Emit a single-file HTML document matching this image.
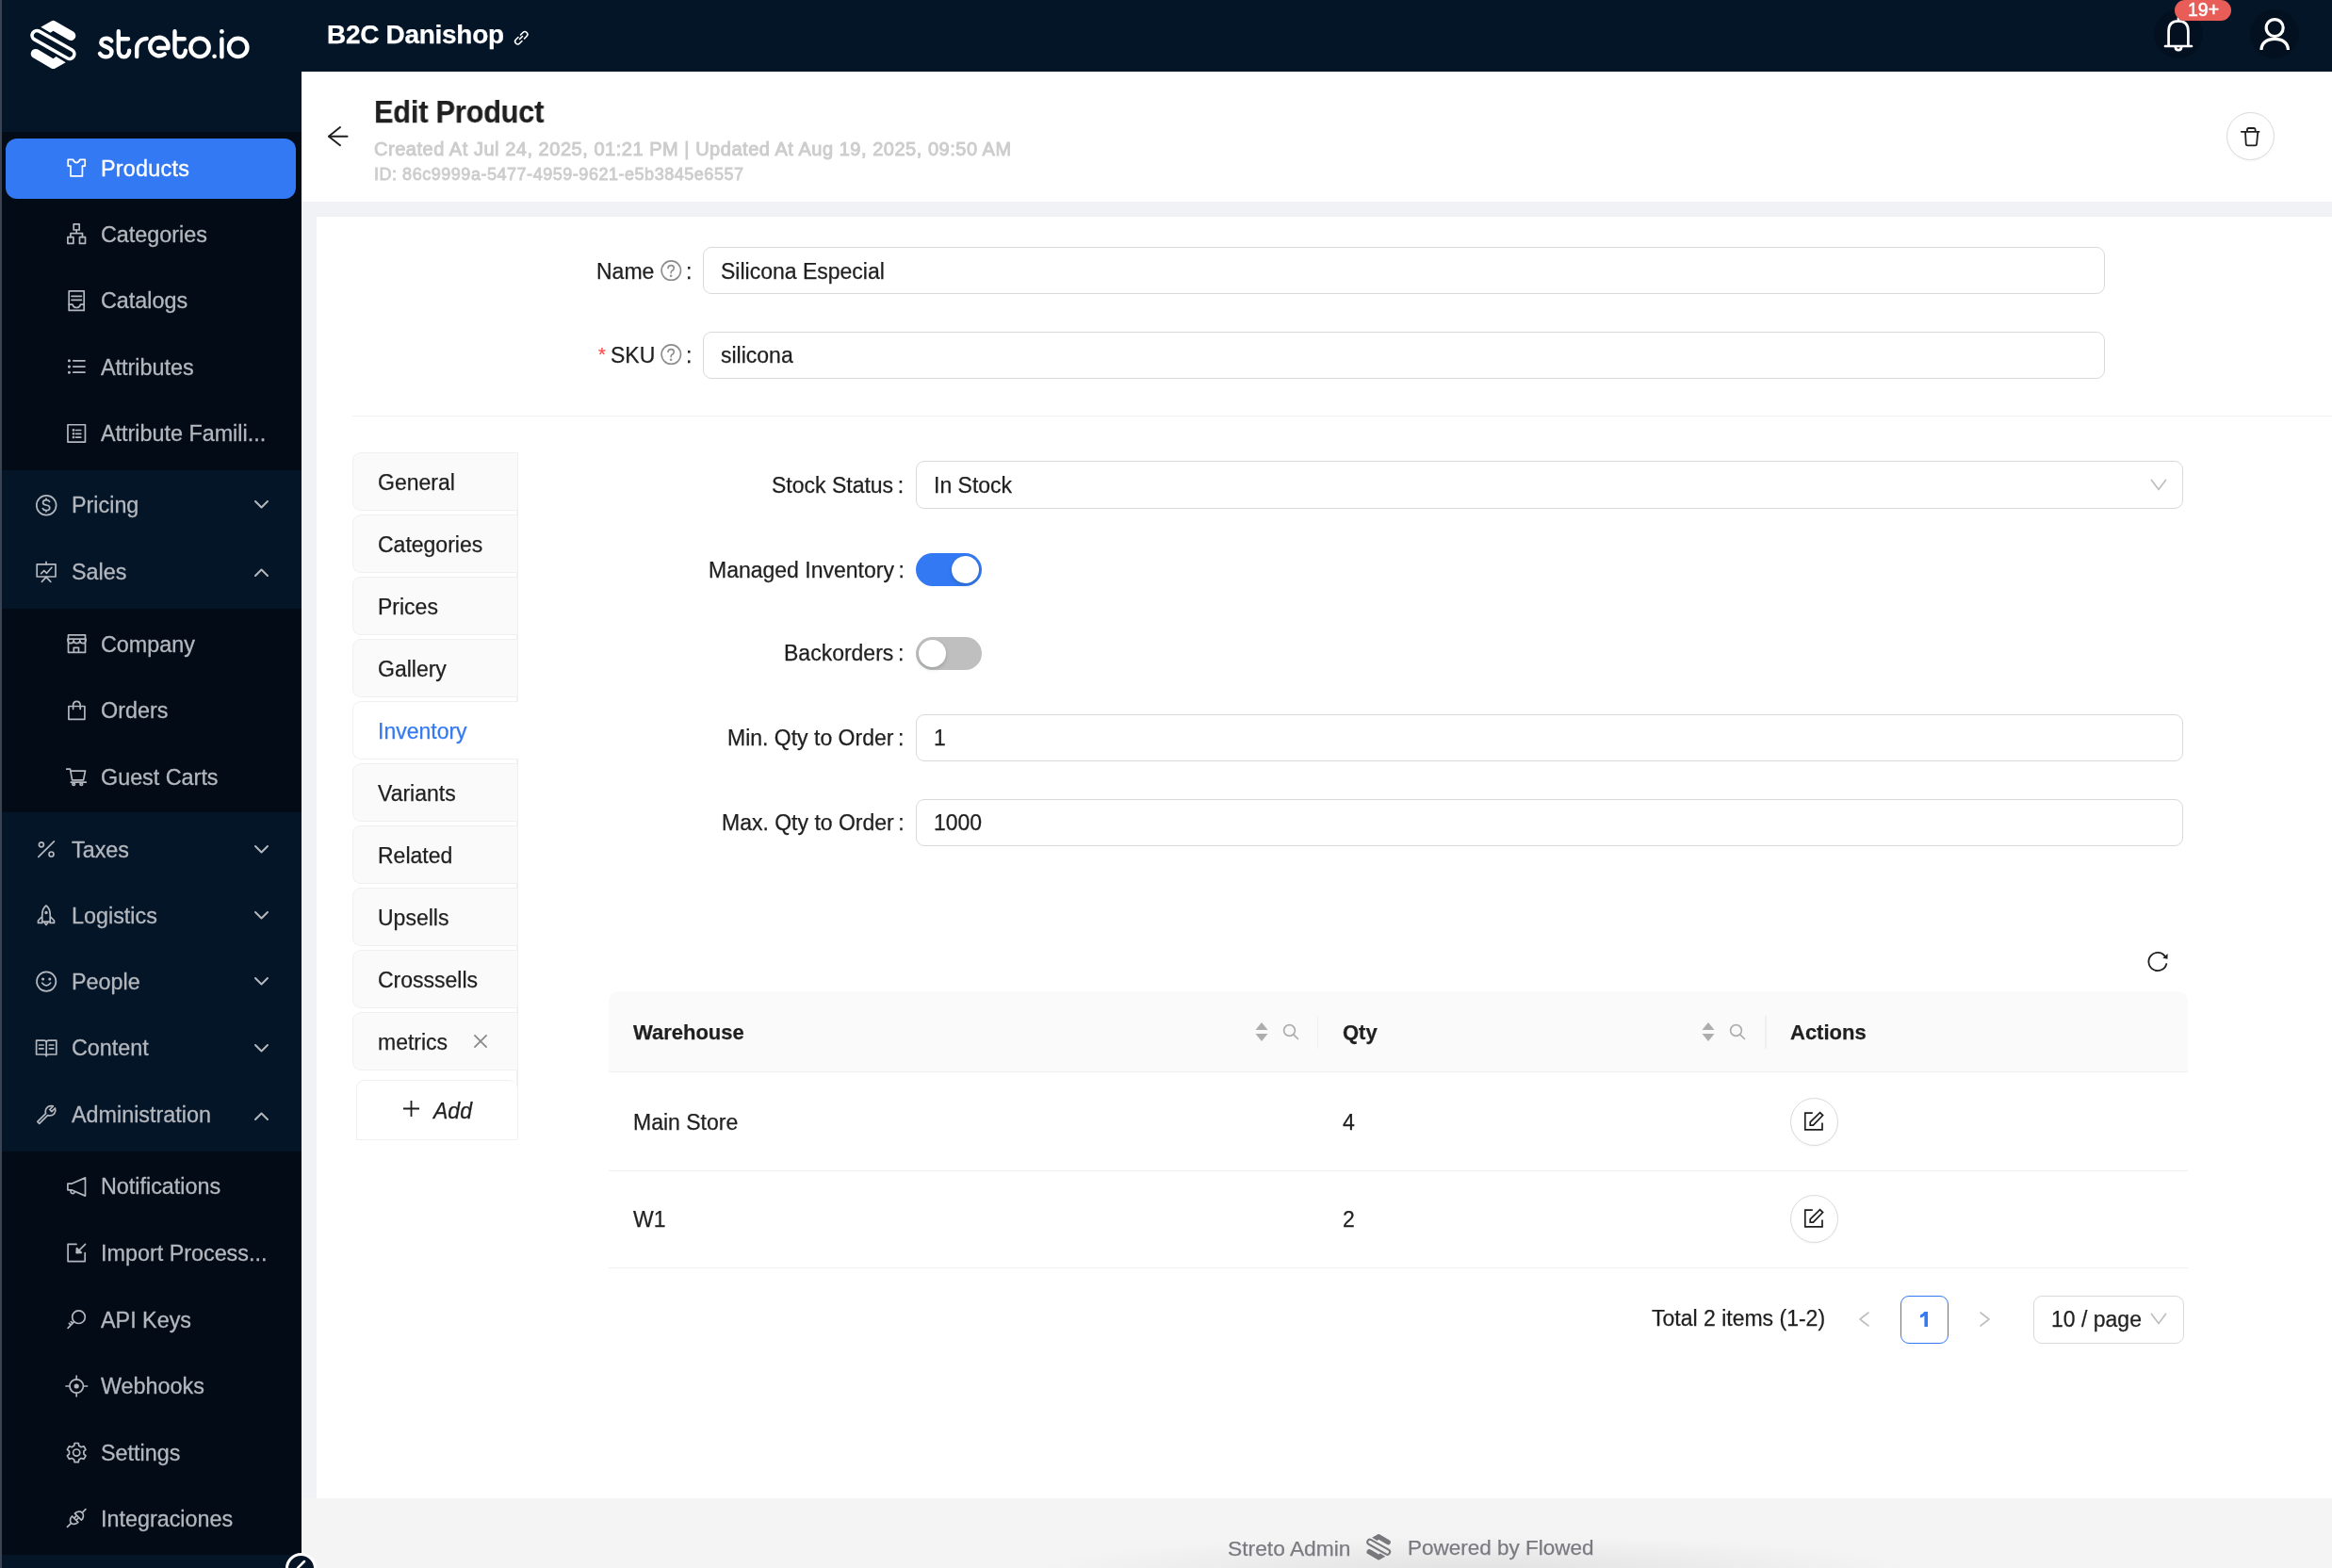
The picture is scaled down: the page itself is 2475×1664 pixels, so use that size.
<!DOCTYPE html>
<html><head><meta charset="utf-8">
<style>
*{box-sizing:border-box;margin:0;padding:0}
html,body{width:2475px;height:1664px;overflow:hidden}
body{position:relative;background:#f0f2f5;font-family:"Liberation Sans",sans-serif;color:#1f1f1f}
.a{position:absolute}
svg{overflow:visible}
.t{position:absolute;white-space:nowrap;line-height:1;will-change:transform;-webkit-text-stroke-width:0.25px}
.inp{position:absolute;border:1.5px solid #d9d9d9;border-radius:9px;background:#fff}
.tab{position:absolute;left:374px;width:175px;height:62px;background:#fafafa;border:1.5px solid #f0f0f0;border-right:none;border-radius:9px 0 0 9px}
</style></head><body>
<div class="a" style="left:0;top:0;width:2475px;height:76px;background:#041528"></div>
<div class="a" style="left:0;top:76px;width:320px;height:1588px;background:#041528"></div>
<div class="a" style="left:0;top:140px;width:320px;height:359px;background:#030b17"></div>
<div class="a" style="left:0;top:646px;width:320px;height:216px;background:#030b17"></div>
<div class="a" style="left:0;top:1222px;width:320px;height:428px;background:#030b17"></div>
<div class="a" style="left:6px;top:147px;width:308px;height:64px;background:#3479f4;border-radius:12px"></div>
<div class="a" style="left:0;top:0;width:2px;height:1664px;background:#3a4452"></div>
<svg class="a" style="left:71px;top:168px;" width="22" height="22" viewBox="0 0 22 22" fill="none" stroke="#ffffff" stroke-width="1.7" stroke-linecap="round" stroke-linejoin="round"><path d="M1.2,1.4 H6.6 Q7.9,4.6 10.2,4.6 Q12.5,4.6 13.8,1.4 H19.2 V8.1 H16.4 V18.9 H4 V8.1 H1.2 Z"/></svg>
<div class="t" style="left:107.3px;top:167.6px;font-size:23.35px;color:#ffffff;font-weight:400;letter-spacing:0.25px;-webkit-text-stroke:0.35px #fff">Products</div>
<svg class="a" style="left:71px;top:238.3px;" width="22" height="22" viewBox="0 0 22 22" fill="none" stroke="#b4b8be" stroke-width="1.7" stroke-linecap="round" stroke-linejoin="round"><rect x="7.2" y="-0.2" width="6" height="6.2"/><rect x="0.9" y="13.7" width="6" height="6.6"/><rect x="13.5" y="13.7" width="6" height="6.6"/><path d="M10.2,6 V9.7 M3.9,13.7 V9.7 H16.5 V13.7"/></svg>
<div class="t" style="left:107.3px;top:237.9px;font-size:23.35px;color:#b4b8be;font-weight:400;-webkit-text-stroke:0.3px #b4b8be">Categories</div>
<svg class="a" style="left:71px;top:308.7px;" width="22" height="22" viewBox="0 0 22 22" fill="none" stroke="#b4b8be" stroke-width="1.7" stroke-linecap="round" stroke-linejoin="round"><rect x="2.2" y="-0.05" width="16" height="20.5"/><path d="M5,5.3 H15.4 M5,9.3 H15.4 M2.2,14.2 H6 Q7,17.5 10.2,17.5 Q13.4,17.5 14.4,14.2 H18.2"/></svg>
<div class="t" style="left:107.3px;top:308.3px;font-size:23.35px;color:#b4b8be;font-weight:400;-webkit-text-stroke:0.3px #b4b8be">Catalogs</div>
<svg class="a" style="left:71px;top:379px;" width="22" height="22" viewBox="0 0 22 22" fill="none" stroke="#b4b8be" stroke-width="1.7" stroke-linecap="round" stroke-linejoin="round"><path d="M6.8,3.8 H19 M6.8,10.1 H19 M6.8,16.2 H19"/><circle cx="2.4" cy="3.8" r="0.7" fill="#b4b8be"/><circle cx="2.4" cy="10.1" r="0.7" fill="#b4b8be"/><circle cx="2.4" cy="16.2" r="0.7" fill="#b4b8be"/></svg>
<div class="t" style="left:107.3px;top:378.6px;font-size:23.35px;color:#b4b8be;font-weight:400;-webkit-text-stroke:0.3px #b4b8be">Attributes</div>
<svg class="a" style="left:71px;top:449.5px;" width="22" height="22" viewBox="0 0 22 22" fill="none" stroke="#b4b8be" stroke-width="1.7" stroke-linecap="round" stroke-linejoin="round"><rect x="0.95" y="0.75" width="18.5" height="18.3"/><path d="M9.6,6.5 H14.8 M9.6,10.3 H14.8 M9.6,14.1 H14.8"/><circle cx="7" cy="6.5" r="0.55" fill="#b4b8be"/><circle cx="7" cy="10.3" r="0.55" fill="#b4b8be"/><circle cx="7" cy="14.1" r="0.55" fill="#b4b8be"/></svg>
<div class="t" style="left:107.3px;top:449.1px;font-size:23.35px;color:#b4b8be;font-weight:400;-webkit-text-stroke:0.3px #b4b8be">Attribute Famili...</div>
<svg class="a" style="left:38px;top:525px;" width="22" height="22" viewBox="0 0 22 22" fill="none" stroke="#b4b8be" stroke-width="1.7" stroke-linecap="round" stroke-linejoin="round"><circle cx="11.2" cy="11.2" r="10.4"/><path d="M14.6,7.3 Q13.8,5.7 11,5.7 Q7.6,5.7 7.6,8.4 Q7.6,10.4 11,11 Q14.8,11.6 14.8,14 Q14.8,16.6 11,16.6 Q8.2,16.6 7.4,14.6 M11,4 V5.7 M11,16.6 V18"/></svg>
<div class="t" style="left:76.3px;top:524.6px;font-size:23.35px;color:#b4b8be;font-weight:400;-webkit-text-stroke:0.3px #b4b8be">Pricing</div>
<svg class="a" style="left:270px;top:531px;" width="15" height="9" viewBox="0 0 15 9" fill="none" stroke="#b4b8be" stroke-width="2" stroke-linecap="round" stroke-linejoin="round"><path d="M1 1 L7.5 7.5 L14 1"/></svg>
<svg class="a" style="left:38px;top:596px;" width="22" height="22" viewBox="0 0 22 22" fill="none" stroke="#b4b8be" stroke-width="1.7" stroke-linecap="round" stroke-linejoin="round"><rect x="1.2" y="2.9" width="19.8" height="13.1"/><path d="M11,0.3 V2.9 M5.7,12.6 L8.8,9.5 L11.6,12.3 L16.9,6.3 M11,16.4 L6.4,21.4 M11,16.4 L15.8,21.4"/></svg>
<div class="t" style="left:76.3px;top:595.6px;font-size:23.35px;color:#b4b8be;font-weight:400;-webkit-text-stroke:0.3px #b4b8be">Sales</div>
<svg class="a" style="left:270px;top:603px;" width="15" height="9" viewBox="0 0 15 9" fill="none" stroke="#b4b8be" stroke-width="2" stroke-linecap="round" stroke-linejoin="round"><path d="M1 8 L7.5 1.5 L14 8"/></svg>
<svg class="a" style="left:71px;top:673px;" width="22" height="22" viewBox="0 0 22 22" fill="none" stroke="#b4b8be" stroke-width="1.7" stroke-linecap="round" stroke-linejoin="round"><path d="M1.5,0.8 H19.5 V19.3 H1.5 Z M1.5,5.2 H19.5 M0.8,5.2 Q0.8,9.6 4,9.6 Q7.2,9.6 7.2,6.5 Q7.2,9.6 10.5,9.6 Q13.8,9.6 13.8,6.5 Q13.8,9.6 17,9.6 Q20.2,9.6 20.2,5.2 M7.3,19.3 V14.4 H12.5 V19.3"/></svg>
<div class="t" style="left:107.3px;top:672.6px;font-size:23.35px;color:#b4b8be;font-weight:400;-webkit-text-stroke:0.3px #b4b8be">Company</div>
<svg class="a" style="left:71px;top:743px;" width="22" height="22" viewBox="0 0 22 22" fill="none" stroke="#b4b8be" stroke-width="1.7" stroke-linecap="round" stroke-linejoin="round"><rect x="1.9" y="6.5" width="17" height="13.8"/><path d="M6.6,9.5 V5.8 Q6.6,1.4 10.4,1.4 Q14.2,1.4 14.2,5.8 V9.5"/></svg>
<div class="t" style="left:107.3px;top:742.6px;font-size:23.35px;color:#b4b8be;font-weight:400;-webkit-text-stroke:0.3px #b4b8be">Orders</div>
<svg class="a" style="left:71px;top:814px;" width="22" height="22" viewBox="0 0 22 22" fill="none" stroke="#b4b8be" stroke-width="1.7" stroke-linecap="round" stroke-linejoin="round"><path d="M-0.3,2.2 H3.5 L5.6,13.8 H17.5 L19.5,4.2 H4.1 M4.3,16.2 H20.3"/><circle cx="7.2" cy="18.2" r="1.3"/><circle cx="15.3" cy="18.2" r="1.3"/></svg>
<div class="t" style="left:107.3px;top:813.6px;font-size:23.35px;color:#b4b8be;font-weight:400;-webkit-text-stroke:0.3px #b4b8be">Guest Carts</div>
<svg class="a" style="left:38px;top:891px;" width="22" height="22" viewBox="0 0 22 22" fill="none" stroke="#b4b8be" stroke-width="1.7" stroke-linecap="round" stroke-linejoin="round"><circle cx="5.9" cy="5.3" r="2.5"/><circle cx="16.5" cy="15.5" r="2.5"/><path d="M19.4,1.8 L2.8,18.4"/></svg>
<div class="t" style="left:76.3px;top:890.6px;font-size:23.35px;color:#b4b8be;font-weight:400;-webkit-text-stroke:0.3px #b4b8be">Taxes</div>
<svg class="a" style="left:270px;top:897px;" width="15" height="9" viewBox="0 0 15 9" fill="none" stroke="#b4b8be" stroke-width="2" stroke-linecap="round" stroke-linejoin="round"><path d="M1 1 L7.5 7.5 L14 1"/></svg>
<svg class="a" style="left:38px;top:961px;" width="22" height="22" viewBox="0 0 22 22" fill="none" stroke="#b4b8be" stroke-width="1.7" stroke-linecap="round" stroke-linejoin="round"><path d="M11,0 Q6.8,3.2 6.8,10 V17.2 H15.2 V10 Q15.2,3.2 11,0 Z M6.8,11.5 L2.5,16 V18.4 H6.8 M15.2,11.5 L19.5,16 V18.4 H15.2 M8.6,17.2 L11,20.6 L13.4,17.2"/><circle cx="11" cy="7.5" r="0.9" fill="#b4b8be"/></svg>
<div class="t" style="left:76.3px;top:960.6px;font-size:23.35px;color:#b4b8be;font-weight:400;-webkit-text-stroke:0.3px #b4b8be">Logistics</div>
<svg class="a" style="left:270px;top:967px;" width="15" height="9" viewBox="0 0 15 9" fill="none" stroke="#b4b8be" stroke-width="2" stroke-linecap="round" stroke-linejoin="round"><path d="M1 1 L7.5 7.5 L14 1"/></svg>
<svg class="a" style="left:38px;top:1031.4px;" width="22" height="22" viewBox="0 0 22 22" fill="none" stroke="#b4b8be" stroke-width="1.7" stroke-linecap="round" stroke-linejoin="round"><circle cx="11.2" cy="10.6" r="10.2"/><path d="M6.8,12.2 Q11.2,17.6 15.6,12.2"/><circle cx="7.6" cy="8" r="0.7" fill="#b4b8be"/><circle cx="14.8" cy="8" r="0.7" fill="#b4b8be"/></svg>
<div class="t" style="left:76.3px;top:1031.0px;font-size:23.35px;color:#b4b8be;font-weight:400;-webkit-text-stroke:0.3px #b4b8be">People</div>
<svg class="a" style="left:270px;top:1037.4px;" width="15" height="9" viewBox="0 0 15 9" fill="none" stroke="#b4b8be" stroke-width="2" stroke-linecap="round" stroke-linejoin="round"><path d="M1 1 L7.5 7.5 L14 1"/></svg>
<svg class="a" style="left:38px;top:1101.5px;" width="22" height="22" viewBox="0 0 22 22" fill="none" stroke="#b4b8be" stroke-width="1.7" stroke-linecap="round" stroke-linejoin="round"><path d="M0.6,2.2 H8.6 Q11.2,2.2 11.2,4.4 V18.7 Q11.2,17 8.6,17 H0.6 Z M21.8,2.2 H13.8 Q11.2,2.2 11.2,4.4 M21.8,2.2 V17 H13.8 Q11.2,17 11.2,18.7 M3.6,7 H8 M3.6,10.8 H8 M14.4,7 H18.8 M14.4,10.8 H18.8"/></svg>
<div class="t" style="left:76.3px;top:1101.1px;font-size:23.35px;color:#b4b8be;font-weight:400;-webkit-text-stroke:0.3px #b4b8be">Content</div>
<svg class="a" style="left:270px;top:1107.5px;" width="15" height="9" viewBox="0 0 15 9" fill="none" stroke="#b4b8be" stroke-width="2" stroke-linecap="round" stroke-linejoin="round"><path d="M1 1 L7.5 7.5 L14 1"/></svg>
<svg class="a" style="left:38px;top:1172.5px;" width="22" height="22" viewBox="0 0 22 22" fill="none" stroke="#b4b8be" stroke-width="1.7" stroke-linecap="round" stroke-linejoin="round"><path d="M1.8,17.4 L10.6,8.6 Q9.4,4.4 12.6,1.8 Q15.2,0 18.4,0.9 L14.8,4.5 L16.9,6.6 L20.5,3 Q21.6,6 19.6,8.8 Q16.8,11.8 12.6,10.6 L3.8,19.4 Z"/></svg>
<div class="t" style="left:76.3px;top:1172.1px;font-size:23.35px;color:#b4b8be;font-weight:400;-webkit-text-stroke:0.3px #b4b8be">Administration</div>
<svg class="a" style="left:270px;top:1179.5px;" width="15" height="9" viewBox="0 0 15 9" fill="none" stroke="#b4b8be" stroke-width="2" stroke-linecap="round" stroke-linejoin="round"><path d="M1 8 L7.5 1.5 L14 8"/></svg>
<svg class="a" style="left:71px;top:1248.6px;" width="22" height="22" viewBox="0 0 22 22" fill="none" stroke="#b4b8be" stroke-width="1.7" stroke-linecap="round" stroke-linejoin="round"><path d="M0.9,7.2 H4.8 L19.5,0.9 V20.1 L4.8,13.8 H0.9 Z M4.2,14 Q3.6,17.6 6,17.6 Q8,17.6 8.4,15.4"/></svg>
<div class="t" style="left:107.3px;top:1248.2px;font-size:23.35px;color:#b4b8be;font-weight:400;-webkit-text-stroke:0.3px #b4b8be">Notifications</div>
<svg class="a" style="left:71px;top:1319.4px;" width="22" height="22" viewBox="0 0 22 22" fill="none" stroke="#b4b8be" stroke-width="1.7" stroke-linecap="round" stroke-linejoin="round"><path d="M10,1.4 H1.1 V19.6 H19.2 V10.6 M19.5,1.4 L11.4,9.5"/><path d="M10.2,10.6 L10.5,5.6 L15.3,10.4 Z" fill="#b4b8be"/></svg>
<div class="t" style="left:107.3px;top:1319.0px;font-size:23.35px;color:#b4b8be;font-weight:400;-webkit-text-stroke:0.3px #b4b8be">Import Process...</div>
<svg class="a" style="left:71px;top:1390px;" width="22" height="22" viewBox="0 0 22 22" fill="none" stroke="#b4b8be" stroke-width="1.7" stroke-linecap="round" stroke-linejoin="round"><circle cx="12.5" cy="7.7" r="6.8"/><path d="M7.5,12.9 L1.1,19.3 M4.2,16.2 L2.4,14.4 M6.1,14.3 L4.4,12.6"/></svg>
<div class="t" style="left:107.3px;top:1389.6px;font-size:23.35px;color:#b4b8be;font-weight:400;-webkit-text-stroke:0.3px #b4b8be">API Keys</div>
<svg class="a" style="left:71px;top:1460px;" width="22" height="22" viewBox="0 0 22 22" fill="none" stroke="#b4b8be" stroke-width="1.7" stroke-linecap="round" stroke-linejoin="round"><circle cx="10.2" cy="11" r="7.2"/><circle cx="10.2" cy="11" r="2.6" fill="#b4b8be" stroke="none"/><path d="M10.2,0.2 V3.7 M10.2,18.3 V21.8 M-1,11 H2.6 M17.8,11 H21.6"/></svg>
<div class="t" style="left:107.3px;top:1459.6px;font-size:23.35px;color:#b4b8be;font-weight:400;-webkit-text-stroke:0.3px #b4b8be">Webhooks</div>
<svg class="a" style="left:71px;top:1531px;" width="22" height="22" viewBox="0 0 22 22" fill="none" stroke="#b4b8be" stroke-width="1.7" stroke-linecap="round" stroke-linejoin="round"><g transform="translate(-0.8,-0.4)"><path d="M9,1.8 H13 L13.6,4.6 L16,6 L18.8,5.1 L20.8,8.6 L18.7,10.5 V13.3 L20.8,15.2 L18.8,18.7 L16,17.8 L13.6,19.2 L13,22 H9 L8.4,19.2 L6,17.8 L3.2,18.7 L1.2,15.2 L3.3,13.3 V10.5 L1.2,8.6 L3.2,5.1 L6,6 L8.4,4.6 Z" transform="translate(0,-0.9)"/><circle cx="11" cy="11" r="3.6"/></g></svg>
<div class="t" style="left:107.3px;top:1530.6px;font-size:23.35px;color:#b4b8be;font-weight:400;-webkit-text-stroke:0.3px #b4b8be">Settings</div>
<svg class="a" style="left:71px;top:1601px;" width="22" height="22" viewBox="0 0 22 22" fill="none" stroke="#b4b8be" stroke-width="1.7" stroke-linecap="round" stroke-linejoin="round"><path d="M8.4,5.2 L15.4,12.2 A4.95,6.2 45 0 0 8.4,5.2 Z M5.5,8 L11.9,14.4 A4.5,5.8 45 0 1 5.5,8 Z M7.6,10.1 L9.4,8.3 M9.8,12.3 L11.6,10.5 M16.3,4.3 L19.9,0.7 M4.6,15.3 L0.5,19.4"/></svg>
<div class="t" style="left:107.3px;top:1600.6px;font-size:23.35px;color:#b4b8be;font-weight:400;-webkit-text-stroke:0.3px #b4b8be">Integraciones</div>
<svg class="a" style="left:28px;top:18px" width="60" height="60" viewBox="0 0 1568 1568"><path id="lp" d="M400,280 L700,112 Q745,88 790,112 L1290,400 A132,132 0 0 1 1180,642 L745,385 L665,440 Z" fill="#fff"/><path d="M400,280 L700,112 Q745,88 790,112 L1290,400 A132,132 0 0 1 1180,642 L745,385 L665,440 Z" fill="#fff" transform="rotate(180 745 770)"/><path d="M356,395.7 L1266,915.7 A132,132 0 0 1 1134,1144.3 L224,624.3 A132,132 0 0 1 356,395.7 Z" fill="none" stroke="#fff" stroke-width="95"/></svg>
<svg class="a" style="left:0;top:0" width="280" height="76" viewBox="0 0 280 76" fill="none" stroke="#fff" stroke-width="4.4" stroke-linecap="round" stroke-linejoin="round"><path d="M118.3,43.4 C117,41.5 115,40.8 112.7,40.8 C109.5,40.8 107.3,42.5 107.3,45 C107.3,47.8 110,48.6 112.7,49.6 C115.8,50.7 118.5,51.8 118.5,55 C118.5,58.2 116,60.4 112.7,60.4 C109.8,60.4 107.5,59.2 106,56.8"/><path d="M125.8,33.3 V53.8 A5.7,6.6 0 0 0 137.2,53.8 M125.8,41.2 H136"/><path d="M145.2,60 V51.4 A10.4,10.4 0 0 1 155.6,41"/><path d="M168,51 H178.5 A9.7,9.7 0 1 0 174.7,57.3"/><path d="M185.5,33.3 V53.8 A5.7,6.6 0 0 0 196.9,53.8 M185.5,41.2 H195.7"/><circle cx="212" cy="50.4" r="9.7"/><circle cx="252.7" cy="50.4" r="9.7"/><path d="M235.4,41.5 V60.2"/><circle cx="227.6" cy="59.8" r="2.3" fill="#fff" stroke="none"/><circle cx="235.4" cy="33.4" r="2.4" fill="#fff" stroke="none"/></svg>
<div class="t" style="left:347px;top:22.7px;font-size:28px;color:#fff;font-weight:700;letter-spacing:-0.3px">B2C Danishop</div>
<svg class="a" style="left:544px;top:31px;" width="18" height="18" viewBox="0 0 18 18" fill="none" stroke="#fff" stroke-width="1.6" stroke-linecap="round" stroke-linejoin="round"><path d="M7.5 10.5 L10.5 7.5 M6 8.5 L3.5 11 Q1.5 13 3.5 15 Q5.5 17 7.5 15 L10 12.5 M8.5 6 L11 3.5 Q13 1.5 15 3.5 Q17 5.5 15 7.5 L12.5 10"/></svg>
<div class="a" style="left:2286px;top:10px;width:52px;height:52px;border-radius:50%;background:#03101f"></div>
<div class="a" style="left:2388px;top:10px;width:52px;height:52px;border-radius:50%;background:#03101f"></div>
<svg class="a" style="left:2296px;top:16px;" width="34" height="40" viewBox="0 0 34 40" fill="none" stroke="#fff" stroke-width="2.7" stroke-linecap="round" stroke-linejoin="round"><path d="M16 6.3 V3 M5.6 33 V17 Q5.6 6.3 16 6.3 Q26.4 6.3 26.4 17 V33 M2 33 H30 M12.8 33.2 Q12.8 37.2 16 37.2 Q19.2 37.2 19.2 33.2"/></svg>
<div class="a" style="left:2308px;top:0;width:60px;height:22px;border-radius:11px;background:#e85d57"></div>
<div class="t" style="left:2321.5px;top:0.8px;font-size:19.5px;color:#fff;font-weight:400;-webkit-text-stroke:0.5px #fff">19+</div>
<svg class="a" style="left:2396px;top:17px;" width="36" height="38" viewBox="0 0 36 38" fill="none" stroke="#fff" stroke-width="3.2" stroke-linecap="round" stroke-linejoin="round"><circle cx="18.2" cy="12.6" r="9"/><path d="M4 36 C4 28.5 10 24.4 18.2 24.4 C26.4 24.4 32.4 28.5 32.4 36" stroke-linecap="butt"/></svg>
<div class="a" style="left:320px;top:76px;width:2155px;height:138px;background:#fff"></div>
<svg class="a" style="left:347px;top:133px;" width="24" height="22" viewBox="0 0 24 22" fill="none" stroke="#1f1f1f" stroke-width="1.9" stroke-linecap="round" stroke-linejoin="round"><path d="M21.6 11.7 H2.2"/><path d="M14.6 1.6 L1.9 11.7 L14.6 21.8" stroke-linecap="butt"/></svg>
<div class="t" style="left:397.2px;top:101.7px;font-size:33px;color:#1f1f1f;font-weight:700;letter-spacing:-0.2px;transform:scaleX(0.93);transform-origin:0 0">Edit Product</div>
<div class="t" style="left:397px;top:147.7px;font-size:20px;color:#cdcdcd;font-weight:400;letter-spacing:0.53px;-webkit-text-stroke:0.9px #cdcdcd">Created At Jul 24, 2025, 01:21 PM | Updated At Aug 19, 2025, 09:50 AM</div>
<div class="t" style="left:397px;top:175.5px;font-size:18px;color:#cdcdcd;font-weight:400;letter-spacing:0.53px;-webkit-text-stroke:0.8px #cdcdcd">ID: 86c9999a-5477-4959-9621-e5b3845e6557</div>
<div class="a" style="left:2363px;top:119px;width:51px;height:51px;border-radius:50%;border:1.5px solid #d9d9d9;background:#fff;box-shadow:0 2px 0 rgba(0,0,0,0.02)"></div>
<svg class="a" style="left:2378px;top:134px;" width="22" height="22" viewBox="0 0 22 22" fill="none" stroke="#1f1f1f" stroke-width="1.8" stroke-linecap="round" stroke-linejoin="round"><path d="M0.8 5.8 H19.6 M7 5.8 V3.6 Q7 2 8.6 2 H14.2 Q15.6 2 15.6 3.6 V5.8 M5 5.8 L5.7 18.6 Q5.8 20.3 7.4 20.3 H15.4 Q17 20.3 17.1 18.6 L18.3 5.8"/></svg>
<div class="a" style="left:336px;top:230px;width:2139px;height:1360px;background:#fff"></div>
<div class="a" style="left:320px;top:1590px;width:2155px;height:74px;background:#f4f4f4"></div>
<div class="a" style="left:1000px;top:1600px;width:1134px;height:64px;background:radial-gradient(ellipse 470px 36px at 567px 66px, rgba(0,0,0,0.075), rgba(0,0,0,0))"></div>
<div class="t" style="left:1303px;top:1631.7px;font-size:22.8px;color:#7a7a80;font-weight:400;">Streto Admin</div>
<div class="t" style="left:1494px;top:1632.0px;font-size:22.5px;color:#7a7a80;font-weight:400;">Powered by Flowed</div>
<svg class="a" style="left:1448px;top:1626px" width="32" height="32" viewBox="0 0 1568 1568"><path d="M400,280 L700,112 Q745,88 790,112 L1290,400 A132,132 0 0 1 1180,642 L745,385 L665,440 Z" fill="#77777c"/><path d="M400,280 L700,112 Q745,88 790,112 L1290,400 A132,132 0 0 1 1180,642 L745,385 L665,440 Z" fill="#77777c" transform="rotate(180 745 770)"/><path d="M356,395.7 L1266,915.7 A132,132 0 0 1 1134,1144.3 L224,624.3 A132,132 0 0 1 356,395.7 Z" fill="none" stroke="#77777c" stroke-width="100"/></svg>
<div class="a" style="left:303px;top:1648px;width:33px;height:33px;border-radius:50%;background:#061427;border:3px solid #fff"></div>
<svg class="a" style="left:311px;top:1655px;" width="16" height="12" viewBox="0 0 16 12" fill="none" stroke="#fff" stroke-width="2.5" stroke-linecap="round" stroke-linejoin="round"><path d="M12 2 L5 9"/></svg>
<div class="t" style="right:1740.5px;top:276.9px;font-size:23px;color:#1f1f1f;font-weight:400;">:</div>
<div class="t" style="right:1781px;top:276.9px;font-size:23px;color:#1f1f1f;font-weight:400;">Name</div>
<svg class="a" style="left:701px;top:276px;" width="22" height="22" viewBox="0 0 22 22" fill="none" stroke="#8c8c8c" stroke-width="1.6" stroke-linecap="round" stroke-linejoin="round"><circle cx="11.3" cy="11.1" r="10.2"/><path d="M8 8.6 Q8 5.6 11.3 5.6 Q14.3 5.6 14.3 8.3 Q14.3 10.4 12 11.4 Q11.3 11.8 11.1 13.6"/><circle cx="11.1" cy="16.8" r="0.5"/></svg>
<div class="inp" style="left:746px;top:262px;width:1488px;height:50px"></div>
<div class="t" style="left:765px;top:276.9px;font-size:23px;color:#1f1f1f;font-weight:400;">Silicona Especial</div>
<div class="t" style="right:1740.5px;top:366.3px;font-size:23px;color:#1f1f1f;font-weight:400;">:</div>
<div class="t" style="right:1780px;top:366.3px;font-size:23px;color:#1f1f1f;font-weight:400;">SKU</div>
<div class="t" style="left:635px;top:366.1px;font-size:20px;color:#ff4d4f;font-weight:400;">*</div>
<svg class="a" style="left:701px;top:365px;" width="22" height="22" viewBox="0 0 22 22" fill="none" stroke="#8c8c8c" stroke-width="1.6" stroke-linecap="round" stroke-linejoin="round"><circle cx="11.3" cy="11.1" r="10.2"/><path d="M8 8.6 Q8 5.6 11.3 5.6 Q14.3 5.6 14.3 8.3 Q14.3 10.4 12 11.4 Q11.3 11.8 11.1 13.6"/><circle cx="11.1" cy="16.8" r="0.5"/></svg>
<div class="inp" style="left:746px;top:352px;width:1488px;height:50px"></div>
<div class="t" style="left:765px;top:366.3px;font-size:23px;color:#1f1f1f;font-weight:400;">silicona</div>
<div class="a" style="left:374px;top:441px;width:2101px;height:1px;background:#f0f0f0"></div>
<div class="a" style="left:548px;top:480px;width:1.5px;height:729px;background:#f0f0f0"></div>
<div class="tab" style="top:480px;background:#fafafa;"></div>
<div class="t" style="left:401px;top:500.5px;font-size:23px;color:#1f1f1f;font-weight:400;">General</div>
<div class="tab" style="top:546px;background:#fafafa;"></div>
<div class="t" style="left:401px;top:566.5px;font-size:23px;color:#1f1f1f;font-weight:400;">Categories</div>
<div class="tab" style="top:612px;background:#fafafa;"></div>
<div class="t" style="left:401px;top:632.5px;font-size:23px;color:#1f1f1f;font-weight:400;">Prices</div>
<div class="tab" style="top:678px;background:#fafafa;"></div>
<div class="t" style="left:401px;top:698.5px;font-size:23px;color:#1f1f1f;font-weight:400;">Gallery</div>
<div class="tab" style="top:744px;background:#fff;width:176px;"></div>
<div class="t" style="left:401px;top:764.5px;font-size:23px;color:#3479f4;font-weight:400;">Inventory</div>
<div class="tab" style="top:810px;background:#fafafa;"></div>
<div class="t" style="left:401px;top:830.5px;font-size:23px;color:#1f1f1f;font-weight:400;">Variants</div>
<div class="tab" style="top:876px;background:#fafafa;"></div>
<div class="t" style="left:401px;top:896.5px;font-size:23px;color:#1f1f1f;font-weight:400;">Related</div>
<div class="tab" style="top:942px;background:#fafafa;"></div>
<div class="t" style="left:401px;top:962.5px;font-size:23px;color:#1f1f1f;font-weight:400;">Upsells</div>
<div class="tab" style="top:1008px;background:#fafafa;"></div>
<div class="t" style="left:401px;top:1028.5px;font-size:23px;color:#1f1f1f;font-weight:400;">Crosssells</div>
<div class="tab" style="top:1074px;background:#fafafa;"></div>
<div class="t" style="left:401px;top:1094.5px;font-size:23px;color:#1f1f1f;font-weight:400;">metrics</div>
<svg class="a" style="left:501.5px;top:1096.5px;" width="16" height="16" viewBox="0 0 16 16" fill="none" stroke="#8a8a8a" stroke-width="1.8" stroke-linecap="round" stroke-linejoin="round"><path d="M1.4 1.4 L14.6 14.6 M14.6 1.4 L1.4 14.6" stroke-linecap="butt"/></svg>
<div class="a" style="left:378px;top:1146px;width:171px;height:64px;background:#fff;border:1.5px solid #f0f0f0;border-right:none;border-radius:9px 9px 0 0"></div>
<svg class="a" style="left:427px;top:1167px;" width="19" height="19" viewBox="0 0 19 19" fill="none" stroke="#1f1f1f" stroke-width="1.8" stroke-linecap="round" stroke-linejoin="round"><path d="M9.5 1 V18 M1 9.5 H18" stroke-linecap="butt"/></svg>
<div class="t" style="left:460px;top:1167.5px;font-size:23px;color:#1f1f1f;font-weight:400;font-style:italic">Add</div>
<div class="t" style="right:1515.5px;top:503.5px;font-size:23px;color:#1f1f1f;font-weight:400;">Stock Status&thinsp;:</div>
<div class="inp" style="left:972px;top:489px;width:1345px;height:51px"></div>
<div class="t" style="left:991px;top:503.5px;font-size:23px;color:#1f1f1f;font-weight:400;">In Stock</div>
<svg class="a" style="left:2282px;top:508px;" width="18" height="13" viewBox="0 0 18 13" fill="none" stroke="#bfbfbf" stroke-width="1.7" stroke-linecap="round" stroke-linejoin="round"><path d="M1.5 1.5 L9 11.5 L16.5 1.5"/></svg>
<div class="t" style="right:1515.5px;top:594.1px;font-size:23px;color:#1f1f1f;font-weight:400;">Managed Inventory&thinsp;:</div>
<div class="a" style="left:972px;top:587px;width:70px;height:35px;border-radius:18px;background:#3479f4"></div>
<div class="a" style="left:1010px;top:590px;width:29px;height:29px;border-radius:50%;background:#fff;box-shadow:0 2px 4px rgba(0,35,11,0.2)"></div>
<div class="t" style="right:1515.5px;top:682.1px;font-size:23px;color:#1f1f1f;font-weight:400;">Backorders&thinsp;:</div>
<div class="a" style="left:972px;top:676px;width:70px;height:35px;border-radius:18px;background:#bfbfbf"></div>
<div class="a" style="left:975px;top:679px;width:29px;height:29px;border-radius:50%;background:#fff;box-shadow:0 2px 4px rgba(0,35,11,0.2)"></div>
<div class="t" style="right:1515.5px;top:772.0px;font-size:23px;color:#1f1f1f;font-weight:400;">Min. Qty to Order&thinsp;:</div>
<div class="inp" style="left:972px;top:758px;width:1345px;height:50px"></div>
<div class="t" style="left:991px;top:772.0px;font-size:23px;color:#1f1f1f;font-weight:400;">1</div>
<div class="t" style="right:1515.5px;top:861.5px;font-size:23px;color:#1f1f1f;font-weight:400;">Max. Qty to Order&thinsp;:</div>
<div class="inp" style="left:972px;top:848px;width:1345px;height:50px"></div>
<div class="t" style="left:991px;top:861.5px;font-size:23px;color:#1f1f1f;font-weight:400;">1000</div>
<svg class="a" style="left:2279px;top:1009px;" width="22" height="22" viewBox="0 0 22 22" fill="none" stroke="#1f1f1f" stroke-width="1.8" stroke-linecap="round" stroke-linejoin="round"><path d="M20.3,14 A9.6,9.6 0 1 1 18.6,5.6"/><path d="M21.6,3 L16.3,7.8 L21.5,8.8 Z" fill="#1f1f1f" stroke="none"/></svg>
<div class="a" style="left:646px;top:1052px;width:1676px;height:86px;background:#fafafa;border-radius:10px 10px 0 0;border-bottom:1px solid #f0f0f0"></div>
<div class="t" style="left:672px;top:1084.6px;font-size:22px;color:#1f1f1f;font-weight:700;">Warehouse</div>
<div class="t" style="left:1425px;top:1084.6px;font-size:22px;color:#1f1f1f;font-weight:700;">Qty</div>
<div class="t" style="left:1900px;top:1084.6px;font-size:22px;color:#1f1f1f;font-weight:700;">Actions</div>
<svg class="a" style="left:1331.5px;top:1084px;" width="14" height="22" viewBox="0 0 14 22" fill="none" stroke="none" stroke-width="1.8" stroke-linecap="round" stroke-linejoin="round"><path d="M7 1 L13.5 9 H0.5 Z M7 21 L13.5 13 H0.5 Z" fill="#adadad" stroke="none"/></svg>
<svg class="a" style="left:1360.5px;top:1085.5px;" width="18" height="18" viewBox="0 0 18 18" fill="none" stroke="#adadad" stroke-width="1.7" stroke-linecap="round" stroke-linejoin="round"><circle cx="7.5" cy="7.5" r="5.9"/><path d="M11.8 11.8 L16.5 16.5"/></svg>
<svg class="a" style="left:1805.5px;top:1084px;" width="14" height="22" viewBox="0 0 14 22" fill="none" stroke="none" stroke-width="1.8" stroke-linecap="round" stroke-linejoin="round"><path d="M7 1 L13.5 9 H0.5 Z M7 21 L13.5 13 H0.5 Z" fill="#adadad" stroke="none"/></svg>
<svg class="a" style="left:1834.5px;top:1085.5px;" width="18" height="18" viewBox="0 0 18 18" fill="none" stroke="#adadad" stroke-width="1.7" stroke-linecap="round" stroke-linejoin="round"><circle cx="7.5" cy="7.5" r="5.9"/><path d="M11.8 11.8 L16.5 16.5"/></svg>
<div class="a" style="left:1397.5px;top:1078px;width:1.5px;height:35px;background:#f0f0f0"></div>
<div class="a" style="left:1873px;top:1078px;width:1.5px;height:35px;background:#f0f0f0"></div>
<div class="a" style="left:646px;top:1242px;width:1676px;height:1px;background:#f0f0f0"></div>
<div class="a" style="left:646px;top:1345px;width:1676px;height:1px;background:#f0f0f0"></div>
<div class="t" style="left:672px;top:1179.5px;font-size:23px;color:#1f1f1f;font-weight:400;">Main Store</div>
<div class="t" style="left:1425px;top:1179.5px;font-size:23px;color:#1f1f1f;font-weight:400;">4</div>
<div class="a" style="left:1900px;top:1165px;width:51px;height:51px;border-radius:50%;border:1.5px solid #d9d9d9;background:#fff;box-shadow:0 2px 0 rgba(0,0,0,0.02)"></div>
<svg class="a" style="left:1914px;top:1179px;" width="22" height="22" viewBox="0 0 22 22" fill="none" stroke="#1f1f1f" stroke-width="1.7" stroke-linecap="round" stroke-linejoin="round"><path d="M9.8 2.2 H1.8 V19.8 H20 V12.4" stroke-linecap="butt" stroke-linejoin="miter"/><path d="M7.2 15.2 L7.2 11.8 L17.6 1.6 L20.6 4.6 L10.4 15.2 Z" stroke-linejoin="miter"/></svg>
<div class="t" style="left:672px;top:1282.5px;font-size:23px;color:#1f1f1f;font-weight:400;">W1</div>
<div class="t" style="left:1425px;top:1282.5px;font-size:23px;color:#1f1f1f;font-weight:400;">2</div>
<div class="a" style="left:1900px;top:1268px;width:51px;height:51px;border-radius:50%;border:1.5px solid #d9d9d9;background:#fff;box-shadow:0 2px 0 rgba(0,0,0,0.02)"></div>
<svg class="a" style="left:1914px;top:1282px;" width="22" height="22" viewBox="0 0 22 22" fill="none" stroke="#1f1f1f" stroke-width="1.7" stroke-linecap="round" stroke-linejoin="round"><path d="M9.8 2.2 H1.8 V19.8 H20 V12.4" stroke-linecap="butt" stroke-linejoin="miter"/><path d="M7.2 15.2 L7.2 11.8 L17.6 1.6 L20.6 4.6 L10.4 15.2 Z" stroke-linejoin="miter"/></svg>
<div class="t" style="left:1753px;top:1387.7px;font-size:23px;color:#1f1f1f;font-weight:400;">Total 2 items (1-2)</div>
<svg class="a" style="left:1972px;top:1392px;" width="13" height="16" viewBox="0 0 13 16" fill="none" stroke="#bfbfbf" stroke-width="1.6" stroke-linecap="round" stroke-linejoin="round"><path d="M11 1 L2 8 L11 15"/></svg>
<div class="a" style="left:2017px;top:1375px;width:51px;height:51px;border-radius:9px;border:1.5px solid #3479f4;background:#fff"></div>
<svg class="a" style="left:2030px;top:1385px;" width="20" height="26" viewBox="0 0 20 26" fill="none" stroke="none" stroke-width="1.8" stroke-linecap="round" stroke-linejoin="round"><path d="M12.4 6.9 H16 V22.9 H12.4 V11.2 Q10.6 12.8 8 13.6 V10.4 Q11 9.2 12.4 6.9 Z" fill="#3479f4" stroke="none"/></svg>
<svg class="a" style="left:2100px;top:1392px;" width="13" height="16" viewBox="0 0 13 16" fill="none" stroke="#bfbfbf" stroke-width="1.6" stroke-linecap="round" stroke-linejoin="round"><path d="M2 1 L11 8 L2 15"/></svg>
<div class="inp" style="left:2158px;top:1375px;width:160px;height:51px"></div>
<div class="t" style="left:2177px;top:1389.0px;font-size:23px;color:#1f1f1f;font-weight:400;">10 / page</div>
<svg class="a" style="left:2282px;top:1393px;" width="18" height="13" viewBox="0 0 18 13" fill="none" stroke="#bfbfbf" stroke-width="1.7" stroke-linecap="round" stroke-linejoin="round"><path d="M1.5 1.5 L9 11.5 L16.5 1.5"/></svg>
</body></html>
